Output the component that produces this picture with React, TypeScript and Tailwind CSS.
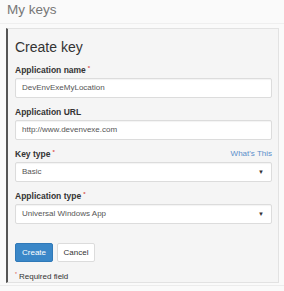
export default function App() {
  const labelCls = "h-[10px] text-[8.5px] font-bold text-[#333] leading-[10px] mb-[3px]";
  const inputCls =
    "h-[20px] w-full bg-white border border-[#dcdcdc] rounded-[2px] px-[6px] flex items-center text-[8px] text-[#555] shadow-[inset_0_1px_1px_rgba(0,0,0,0.05)]";
  const star = <span className="text-[#d9534f] text-[6px] align-top ml-[2px] leading-none">*</span>;
  return (
    <div
      className="w-[284px] h-[291px] bg-[#fafafa] overflow-hidden"
      style={{ fontFamily: '"Liberation Sans", Arial, sans-serif' }}
    >
      <div className="pl-[7px] pt-[2px] h-[23px] text-[13.5px] leading-[16px] text-[#777]">My keys</div>
      <div className="border-t border-[#efefef] h-[5px]" />
      <div className="ml-[6px] w-[273px] h-[255px] bg-[#f5f5f5] border border-[#e2e2e2] border-l-2 border-l-[#555] pl-[7px] pr-[6px] pt-[8px]">
        <div className="h-[20px] text-[14px] leading-[20px] text-[#333]">Create key</div>

        <div className="mt-[8px] flex flex-col">
          <div className={labelCls}>Application name{star}</div>
          <div className={inputCls}>DevEnvExeMyLocation</div>

          <div className={labelCls + " mt-[9px]"}>Application URL</div>
          <div className={inputCls}>http://www.devenvexe.com</div>

          <div className="mt-[9px] mb-[3px] h-[10px] flex items-end justify-between">
            <div className="text-[8.5px] font-bold text-[#333] leading-[10px]">Key type{star}</div>
            <div className="text-[8px] leading-[10px] text-[#5b8fcb]">What's This</div>
          </div>
          <div className={inputCls + " justify-between"}>
            <span>Basic</span>
            <span className="text-[6px] text-[#333] pr-[1px]">▼</span>
          </div>

          <div className={labelCls + " mt-[9px]"}>Application type{star}</div>
          <div className={inputCls + " justify-between"}>
            <span>Universal Windows App</span>
            <span className="text-[6px] text-[#333] pr-[1px]">▼</span>
          </div>

          <div className="mt-[19px] flex gap-[4px]">
            <div className="h-[19px] w-[38px] rounded-[2px] bg-[#3a87c8] border border-[#3079b8] text-white text-[8px] flex items-center justify-center">
              Create
            </div>
            <div className="h-[19px] w-[38px] rounded-[2px] bg-white border border-[#dcdcdc] text-[#333] text-[8px] flex items-center justify-center">
              Cancel
            </div>
          </div>

          <div className="mt-[10px] h-[10px] text-[8px] leading-[10px] text-[#333]">
            <span className="text-[#d9534f] text-[5px] align-top mr-[2px] leading-none">*</span>Required field
          </div>
        </div>
      </div>
      <div className="border-t border-[#ececec] mt-[2px]" />
    </div>
  );
}
